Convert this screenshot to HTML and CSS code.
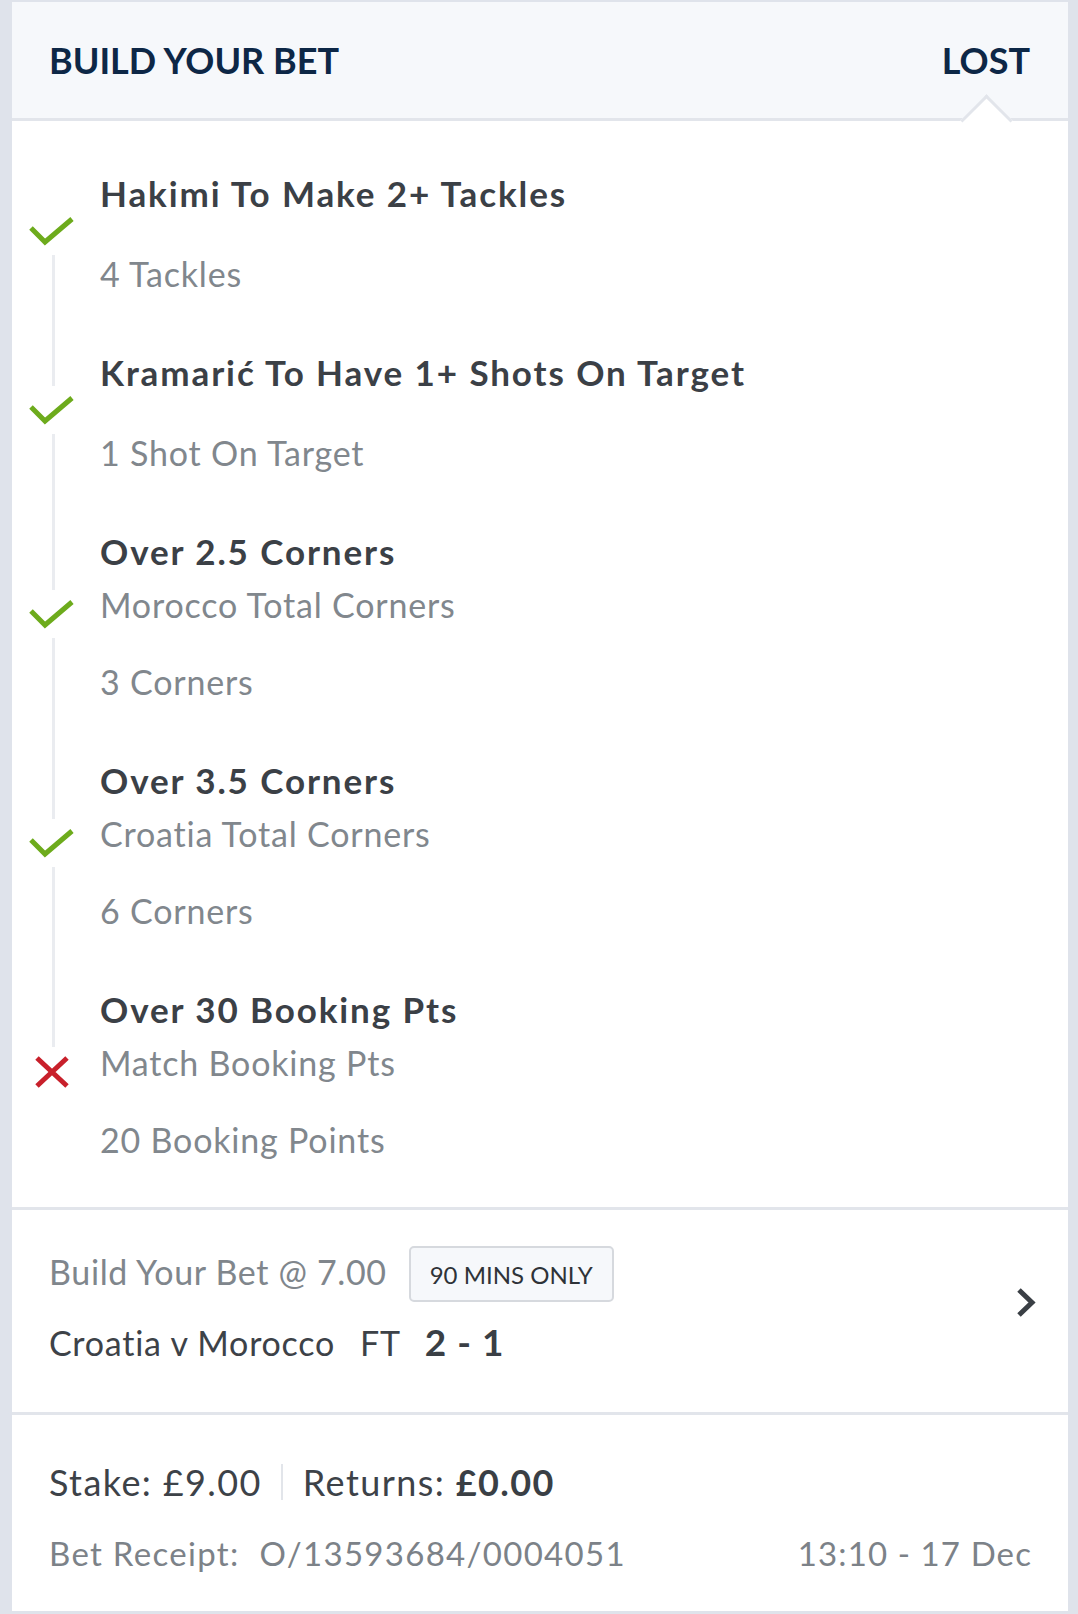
FILE: index.html
```html
<!DOCTYPE html>
<html lang="en">
<head>
<meta charset="utf-8">
<title>Build Your Bet</title>
<link rel="stylesheet" href="styles.css">
</head>
<body>
<div class="card">
  <header class="head">
    <span class="head-title">BUILD YOUR BET</span>
    <span class="head-status">LOST</span>
    <span class="notch"></span>
  </header>

  <section class="legs">
    <div class="leg first">
      <div class="marker">
        <span class="seg top"></span>
        <svg class="icon check" viewBox="0 0 46 30" width="46" height="30"><path d="M2 12 L16 26 L43 3" /></svg>
        <span class="seg bottom"></span>
      </div>
      <div class="leg-text">
        <div class="leg-title">Hakimi To Make 2+ Tackles</div>
        <div class="leg-result">4 Tackles</div>
      </div>
      <div class="gap-line"></div>
    </div>

    <div class="leg">
      <div class="marker">
        <span class="seg top"></span>
        <svg class="icon check" viewBox="0 0 46 30" width="46" height="30"><path d="M2 12 L16 26 L43 3" /></svg>
        <span class="seg bottom"></span>
      </div>
      <div class="leg-text">
        <div class="leg-title">Kramarić To Have 1+ Shots On Target</div>
        <div class="leg-result">1 Shot On Target</div>
      </div>
      <div class="gap-line"></div>
    </div>

    <div class="leg">
      <div class="marker">
        <span class="seg top"></span>
        <svg class="icon check" viewBox="0 0 46 30" width="46" height="30"><path d="M2 12 L16 26 L43 3" /></svg>
        <span class="seg bottom"></span>
      </div>
      <div class="leg-text">
        <div class="leg-title">Over 2.5 Corners</div>
        <div class="leg-market">Morocco Total Corners</div>
        <div class="leg-result">3 Corners</div>
      </div>
      <div class="gap-line"></div>
    </div>

    <div class="leg">
      <div class="marker">
        <span class="seg top"></span>
        <svg class="icon check" viewBox="0 0 46 30" width="46" height="30"><path d="M2 12 L16 26 L43 3" /></svg>
        <span class="seg bottom"></span>
      </div>
      <div class="leg-text">
        <div class="leg-title">Over 3.5 Corners</div>
        <div class="leg-market">Croatia Total Corners</div>
        <div class="leg-result">6 Corners</div>
      </div>
      <div class="gap-line"></div>
    </div>

    <div class="leg last">
      <div class="marker">
        <span class="seg top"></span>
        <svg class="icon cross" viewBox="0 0 34 32" width="34" height="32"><path d="M2 2 L32 30 M32 2 L2 30" /></svg>
        <span class="seg bottom"></span>
      </div>
      <div class="leg-text">
        <div class="leg-title">Over 30 Booking Pts</div>
        <div class="leg-market">Match Booking Pts</div>
        <div class="leg-result">20 Booking Points</div>
      </div>
      <div class="gap-line"></div>
    </div>
  </section>

  <section class="event">
    <div class="event-info">
      <div class="event-row1">
        <span class="price">Build Your Bet @ 7.00</span>
        <span class="badge">90 MINS ONLY</span>
      </div>
      <div class="event-row2"><span class="teams">Croatia v Morocco</span><span class="ft">FT</span><span class="score">2 - 1</span></div>
    </div>
    <svg class="chevron" viewBox="0 0 20 31" width="20" height="31"><path d="M3 3 L16 15.5 L3 28" /></svg>
  </section>

  <section class="summary">
    <div class="money">
      <span class="stake">Stake: £9.00</span>
      <span class="divider"></span>
      <span class="returns">Returns: <b>£0.00</b></span>
    </div>
    <div class="receipt">
      <span class="receipt-id">Bet Receipt:<span class="receipt-num">O/13593684/0004051</span></span>
      <span class="receipt-time">13:10 - 17 Dec</span>
    </div>
  </section>
</div>
</body>
</html>
```

FILE: styles.css
```css
* { box-sizing: border-box; }

html, body {
  margin: 0;
  padding: 0;
}

body {
  background: #dfe3eb;
  font-family: Lato, "Open Sans", "Liberation Sans", sans-serif;
  width: 1078px;
  min-height: 1614px;
  padding: 2px 10px 3px 12px;
}

.card {
  background: #ffffff;
  width: 1056px;
}

/* Header */
.head {
  position: relative;
  height: 119px;
  background: #f6f8fb;
  border-bottom: 3px solid #e2e5eb;
  display: flex;
  align-items: center;
  justify-content: space-between;
  padding: 0 38px 0 37px;
  color: #0d2746;
  font-weight: 700;
  font-size: 36px;
  line-height: 44px;
}

.notch {
  position: absolute;
  right: 63px;
  top: 100px;
  width: 37px;
  height: 37px;
  background: #ffffff;
  border-top: 3px solid #e2e5eb;
  border-left: 3px solid #e2e5eb;
  transform: rotate(45deg);
  z-index: 2;
}

/* Legs */
.legs {
  padding-top: 41px;
}

.leg {
  display: grid;
  grid-template-columns: 80px 1fr;
  grid-template-rows: auto 42px;
  column-gap: 8px;
}

.marker {
  grid-column: 1;
  grid-row: 1;
  display: flex;
  flex-direction: column;
  align-items: center;
}

.seg {
  flex: 1;
  width: 3px;
  background: #eaecf0;
  margin-left: 3px;
}
.seg.top { margin-bottom: 9px; }
.seg.bottom { margin-top: 9px; }
.leg.first .seg.top { visibility: hidden; }
.leg.last .seg.bottom { visibility: hidden; }

.gap-line {
  grid-column: 1;
  grid-row: 2;
  justify-self: center;
  width: 3px;
  margin-left: 3px;
  background: #eaecf0;
}
.leg.last .gap-line { visibility: hidden; }

.icon { display: block; flex: none; }
.check path {
  fill: none;
  stroke: #6dab1c;
  stroke-width: 5;
}
.cross path {
  fill: none;
  stroke: #c8202b;
  stroke-width: 5;
}

.leg-text {
  grid-column: 2;
  grid-row: 1;
}

.leg-title {
  font-weight: 700;
  font-size: 35px;
  letter-spacing: 1.9px;
  line-height: 62px;
  color: #3b4046;
}

.leg-market {
  font-size: 34px;
  letter-spacing: 0.8px;
  line-height: 50px;
  margin-top: -2px;
  color: #81878d;
}

.leg-result {
  font-size: 34px;
  letter-spacing: 0.8px;
  line-height: 50px;
  margin-top: 25px;
  color: #81878d;
}

.leg-market + .leg-result {
  margin-top: 27px;
}

/* Event */
.event {
  border-top: 3px solid #e2e5eb;
  border-bottom: 3px solid #e2e5eb;
  padding: 36px 32px 47px 37px;
  display: flex;
  align-items: center;
  justify-content: space-between;
}

.event-row1 {
  display: flex;
  align-items: center;
  height: 56px;
}

.price {
  font-size: 34px;
  letter-spacing: 0.65px;
  color: #80868c;
  margin-bottom: 6px;
}

.badge {
  margin-left: 22px;
  height: 56px;
  padding: 0 19px;
  display: inline-flex;
  align-items: center;
  border: 2px solid #d6d9de;
  border-radius: 5px;
  background: #f6f8fb;
  font-size: 24px;
  color: #2e3338;
}

.event-row2 {
  margin-top: 18px;
  line-height: 44px;
  font-size: 34px;
  letter-spacing: 0.75px;
  color: #3d4248;
}

.ft { margin-left: 25px; }

.score {
  margin-left: 24px;
  font-weight: 700;
  font-size: 37px;
  letter-spacing: 1px;
  color: #3a3f45;
}

.chevron {
  margin-bottom: 6px;
}
.chevron path {
  fill: none;
  stroke: #3a3f45;
  stroke-width: 5;
}

/* Summary */
.summary {
  padding: 42px 36px 36px 37px;
}

.money {
  display: flex;
  align-items: center;
  font-size: 36px;
  letter-spacing: 1.4px;
  line-height: 50px;
  color: #3d4248;
}

.divider {
  width: 2px;
  height: 36px;
  background: #e2e5ea;
  margin: 0 20px 0 19px;
}

.returns b { font-weight: 700; color: #3a3f45; }

.receipt {
  margin-top: 24px;
  display: flex;
  justify-content: space-between;
  font-size: 33px;
  line-height: 44px;
  color: #7c8288;
}

.receipt-id { letter-spacing: 1.3px; }
.receipt-num { margin-left: 20px; }
.receipt-time { letter-spacing: 1.1px; }
```
